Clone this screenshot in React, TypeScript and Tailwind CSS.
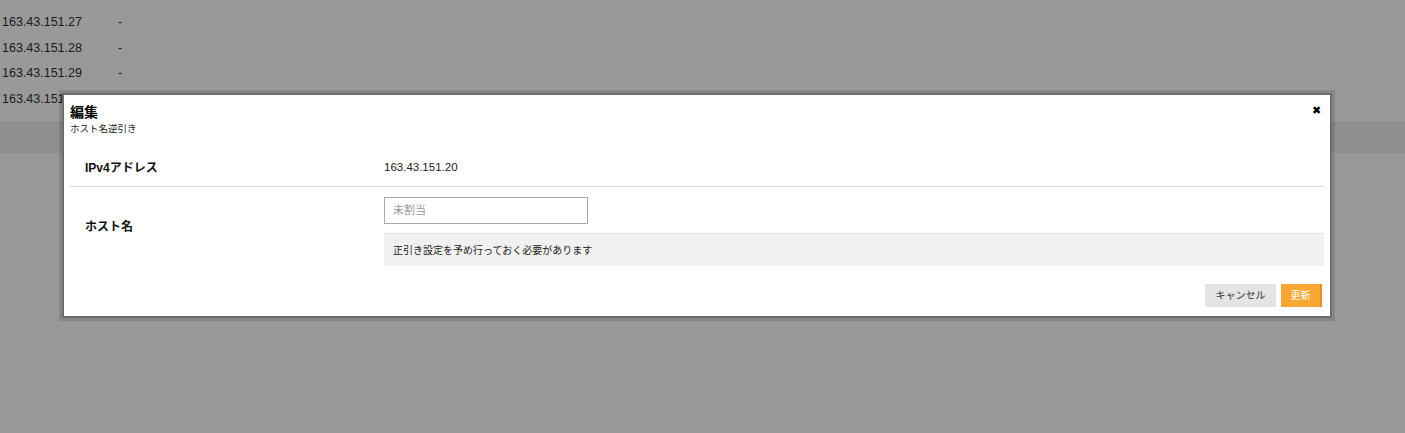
const rows = ["163.43.151.26", "163.43.151.27", "163.43.151.28", "163.43.151.29", "163.43.151.30"];

const font = { fontFamily: '"Liberation Sans", "Noto Sans CJK JP", sans-serif' };

export default function App() {
  return (
    <div className="relative h-[433px] w-[1405px] overflow-hidden bg-[#999999] text-[#1a1a1a]" style={font}>
      <div className="-mt-[16px]">
        {rows.map((ip) => (
          <div key={ip} className="flex h-[25.6px] items-center text-[12.5px]">
            <span className="w-[118px] pl-[2px]">{ip}</span>
            <span>-</span>
          </div>
        ))}
        <div className="mt-[10px] h-[31px] border-t border-[#878787] bg-[#8f8f8f]" />
      </div>

      <div className="absolute left-[62px] top-[93px] w-[1270px] border-2 border-[#6c6c6c] bg-white shadow-[0_0_0_3px_rgba(0,0,0,0.12)]">
        <div className="relative px-[6px] pt-[8px]">
          <h2 className="text-[14px] font-bold leading-[18px] text-black">編集</h2>
          <p className="mt-[1px] text-[9.5px] leading-[13px] text-[#222]">ホスト名逆引き</p>
          <span className="absolute right-[9px] top-[10px] text-[11px] leading-none text-black">✖</span>
        </div>

        <div className="mx-[6px] mt-[14px]">
          <div className="flex h-[38px] items-center border-b border-[#dddddd]">
            <div className="w-[314px] pl-[15px] text-[12px] font-bold text-[#111]">IPv4アドレス</div>
            <div className="text-[11.5px] text-[#222]">163.43.151.20</div>
          </div>
          <div className="flex items-center">
            <div className="w-[314px] pl-[15px] text-[12px] font-bold text-[#111]">ホスト名</div>
            <div className="flex-1 pt-[10px]">
              <div className="flex h-[27px] w-[204px] items-center border border-[#a9a9a9] px-[8px] text-[11px] text-[#999]">
                未割当
              </div>
              <div className="mt-[9px] flex h-[33px] items-center border-t border-[#e2e2e2] bg-[#f1f1f1] px-[9px] text-[10px] text-[#222]">
                正引き設定を予め行っておく必要があります
              </div>
            </div>
          </div>
        </div>

        <div className="flex justify-end gap-[5px] px-[8px] pb-[9px] pt-[18px]">
          <button className="h-[23px] w-[71px] bg-[#e4e4e4] text-[10px] text-[#333]">キャンセル</button>
          <button className="h-[23px] w-[41px] border-r-2 border-[#e8901a] bg-[#f9a731] text-[10px] text-white">更新</button>
        </div>
      </div>
    </div>
  );
}
